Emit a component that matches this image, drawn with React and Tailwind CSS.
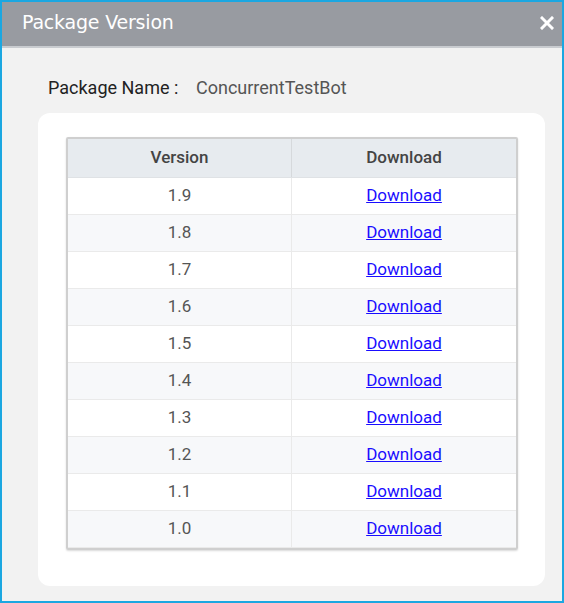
export default function App() {
  const versions = ["1.9", "1.8", "1.7", "1.6", "1.5", "1.4", "1.3", "1.2", "1.1", "1.0"];

  return (
    <div className="w-[564px] h-[603px] border-2 border-[#1ba7e1] bg-[#f2f2f2] flex flex-col overflow-hidden">
      {/* title bar */}
      <div className="h-[46px] shrink-0 bg-[#989ba1] border-b-2 border-[#c9ccd0] flex items-center justify-between pl-[20px] pr-[8px] pb-[4px]">
        <span className="text-white text-[19px] font-['DejaVu_Sans',Verdana,sans-serif] tracking-[-0.2px]">
          Package Version
        </span>
        <svg width="14" height="14" viewBox="0 0 14 14" className="mt-[2px]">
          <path d="M2 2 L12 12 M12 2 L2 12" stroke="white" strokeWidth="3" strokeLinecap="square" />
        </svg>
      </div>

      <div className="flex-1 px-[36px] pt-[27px] font-['Roboto',sans-serif]">
        <div className="flex items-center text-[18px] pl-[10px] h-[24px]">
          <span className="text-[#222] w-[148px]">Package Name :</span>
          <span className="text-[#555]">ConcurrentTestBot</span>
        </div>

        <div className="mt-[14px] bg-white rounded-[12px] w-[507px] pt-[24px] pb-[36px] pl-[28px]">
          <div className="w-[452px] border-2 border-[#cfcfcf] rounded-[2px] shadow-[0_1px_2px_rgba(0,0,0,0.15)]">
            <div className="flex h-[39px] bg-[#e7ebef] text-[#444] font-medium text-[17px] border-b border-[#dfe2e5]">
              <div className="w-[224px] flex items-center justify-center border-r border-[#d6d9dc]">Version</div>
              <div className="flex-1 flex items-center justify-center">Download</div>
            </div>
            {versions.map((v, i) => (
              <div
                key={v}
                className={
                  "flex h-[37px] text-[17px] border-b border-[#eaeaea] " +
                  (i % 2 === 1 ? "bg-[#f7f8fa]" : "bg-white")
                }
              >
                <div className="w-[224px] flex items-center justify-center text-[#555] border-r border-[#eaeaea]">{v}</div>
                <div className="flex-1 flex items-center justify-center">
                  <a href="#" className="text-[#1a0dff] underline">Download</a>
                </div>
              </div>
            ))}
          </div>
        </div>
      </div>
    </div>
  );
}
